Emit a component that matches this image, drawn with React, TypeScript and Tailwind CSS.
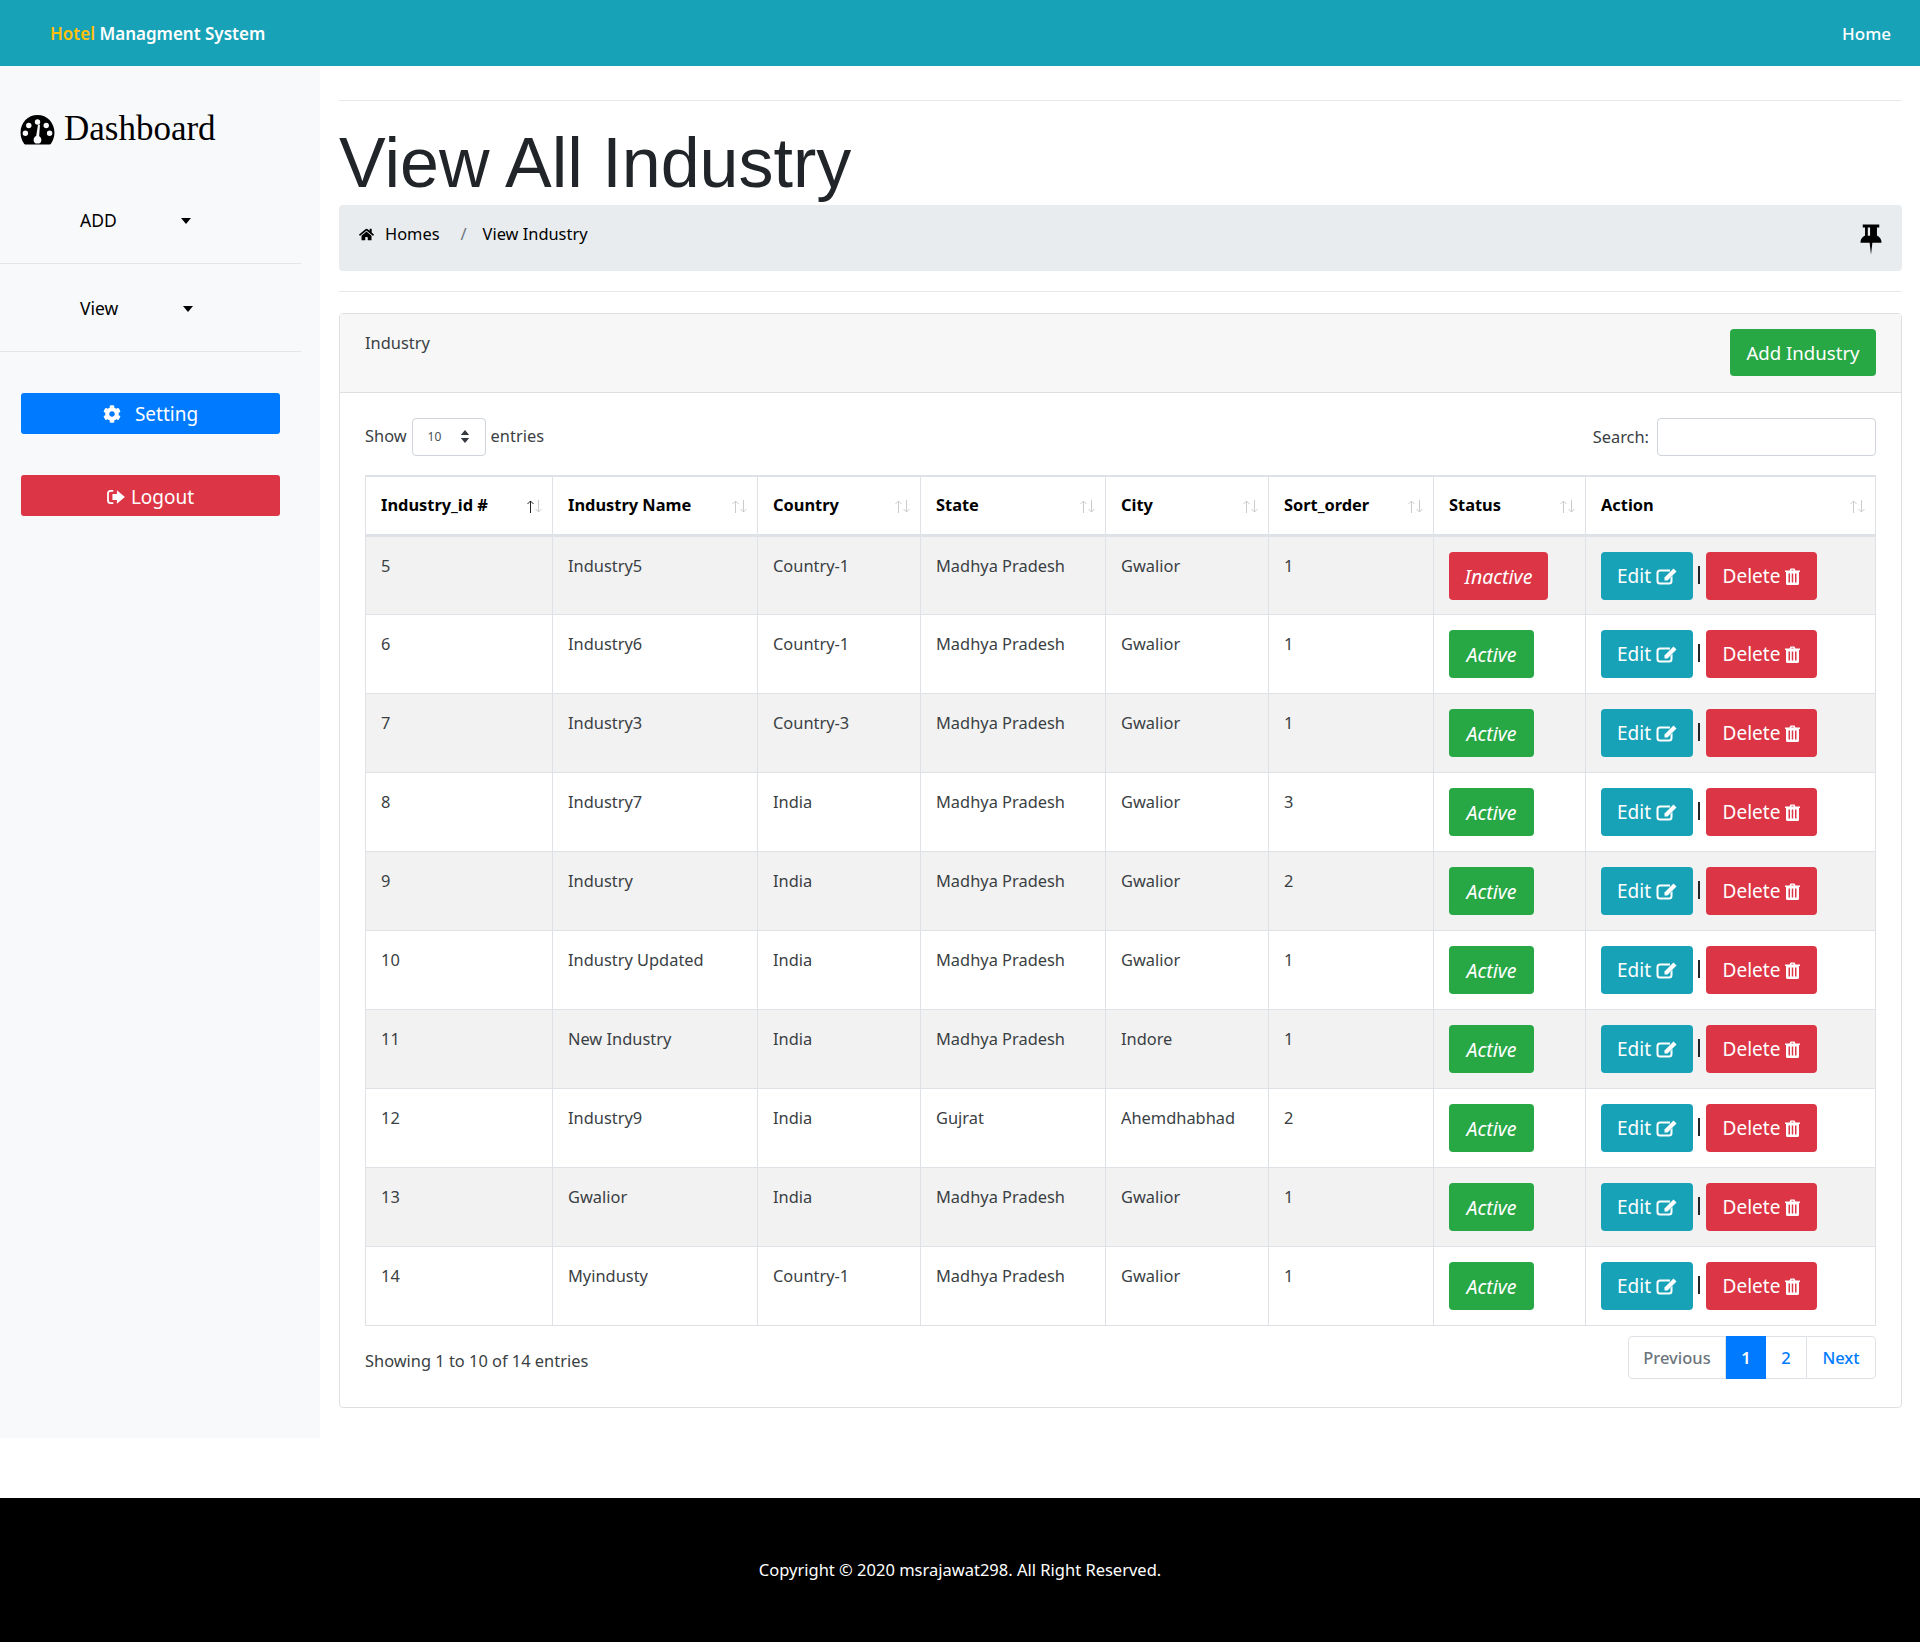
// App.tsx
import React from 'react';
import { FaHome, FaCog } from 'react-icons/fa';

const rows = [
  { id: '5', name: 'Industry5', country: 'Country-1', state: 'Madhya Pradesh', city: 'Gwalior', sort: '1', active: false },
  { id: '6', name: 'Industry6', country: 'Country-1', state: 'Madhya Pradesh', city: 'Gwalior', sort: '1', active: true },
  { id: '7', name: 'Industry3', country: 'Country-3', state: 'Madhya Pradesh', city: 'Gwalior', sort: '1', active: true },
  { id: '8', name: 'Industry7', country: 'India', state: 'Madhya Pradesh', city: 'Gwalior', sort: '3', active: true },
  { id: '9', name: 'Industry', country: 'India', state: 'Madhya Pradesh', city: 'Gwalior', sort: '2', active: true },
  { id: '10', name: 'Industry Updated', country: 'India', state: 'Madhya Pradesh', city: 'Gwalior', sort: '1', active: true },
  { id: '11', name: 'New Industry', country: 'India', state: 'Madhya Pradesh', city: 'Indore', sort: '1', active: true },
  { id: '12', name: 'Industry9', country: 'India', state: 'Gujrat', city: 'Ahemdhabhad', sort: '2', active: true },
  { id: '13', name: 'Gwalior', country: 'India', state: 'Madhya Pradesh', city: 'Gwalior', sort: '1', active: true },
  { id: '14', name: 'Myindusty', country: 'Country-1', state: 'Madhya Pradesh', city: 'Gwalior', sort: '1', active: true },
];

const headers = [
  { label: 'Industry_id #', w: 'w-[187px]', sorted: true },
  { label: 'Industry Name', w: 'w-[205px]' },
  { label: 'Country', w: 'w-[163px]' },
  { label: 'State', w: 'w-[185px]' },
  { label: 'City', w: 'w-[163px]' },
  { label: 'Sort_order', w: 'w-[165px]' },
  { label: 'Status', w: 'w-[152px]' },
  { label: 'Action', w: 'w-[290px]' },
];

const Caret = () => <span className="inline-block w-0 h-0 border-x-[5.5px] border-x-transparent border-t-[6px] border-t-black" />;

const DashboardIcon = () => (
  <svg viewBox="0 0 36 32" className="w-[35px] h-[31px]" fill="#000">
    <path fillRule="evenodd" d="M18 1C8 1 0.5 9 0.5 19c0 4 1.2 8 3.5 11.5 .5 .7 1 1 2 1h24c1 0 1.5-.3 2-1C34.3 27 35.5 23 35.5 19 35.5 9 28 1 18 1zM18 5.500a2.800 2.800 0 1 1 0 5.600 2.800 2.800 0 0 1 0-5.600zM9 9a2.800 2.800 0 1 1 0 5.600A2.800 2.800 0 0 1 9 9zm18 0a2.800 2.800 0 1 1 0 5.600A2.800 2.800 0 0 1 27 9zM5.500 17a2.800 2.800 0 1 1 0 5.600 2.800 2.800 0 0 1 0-5.600zm25 0a2.800 2.800 0 1 1 0 5.600 2.800 2.800 0 0 1 0-5.600zM20.500 11.500l-.8 11.400c1.300 .7 2.300 2 2.300 3.600a4 4 0 0 1-8 0c0-1.700 1.100-3.100 2.600-3.700l1.900-11.400c.2-.9 2.100-.9 2 .1z" />
  </svg>
);

const PinIcon = () => (
  <svg viewBox="0 0 24 33" className="w-[22px] h-[33px]" fill="#000">
    <path fillRule="evenodd" d="M3 0h18v3.500h-2.500V12c3 1.500 5 4 5 8H13.500L12 33 10.500 20H.5c0-4 2-6.500 5-8V3.500H3zM8.500 3.500V12.500H11V3.500z" />
  </svg>
);

const LogoutIcon = () => (
  <svg viewBox="0 0 20 18" className="w-[18px] h-[16px]" fill="white">
    <path d="M7 1H4a4 4 0 0 0-4 4v8a4 4 0 0 0 4 4h3v-2H4a2 2 0 0 1-2-2V5a2 2 0 0 1 2-2h3zM11 1.500v4H6v7h5v4L20 9z" />
  </svg>
);

const EditIcon = () => (
  <svg viewBox="0 0 21 17" className="w-[21px] h-[17px]" fill="white">
    <path d="M4 1.500h10v2H4A1.500 1.500 0 0 0 2.500 5v8A1.500 1.500 0 0 0 4 14.500h9A1.500 1.500 0 0 0 14.500 13v-3l2-2v5a3.500 3.500 0 0 1-3.500 3.500H4A3.500 3.500 0 0 1 .5 13V5A3.500 3.500 0 0 1 4 1.500z" />
    <path d="M17.500 .5l3 3L11.500 12.500H8.500V9.500z" />
  </svg>
);

const TrashIcon = () => (
  <svg viewBox="0 0 15 17" className="w-[15px] h-[17px]" fill="white">
    <path fillRule="evenodd" d="M4.500 2.500L5.500 .5h4l1 2H15V4H14V15.500A1.500 1.500 0 0 1 12.500 17h-10A1.500 1.500 0 0 1 1 15.500V4H0V2.500zM6.300 2.500h2.400l-.4-.8H6.700zM3.500 5.500v9h1.500v-9zM6.750 5.500v9h1.500v-9zM10 5.500v9h1.500v-9z" />
  </svg>
);

const SortIcon = ({ sorted }: { sorted?: boolean }) => (
  <svg viewBox="0 0 15 13" className="absolute right-[10px] top-[23px] w-[15px] h-[13px]" fill="none" strokeWidth="1">
    <path d="M3.500 13V1M.5 4l3-3 3 3" stroke={sorted ? '#212529' : '#c9cbcd'} />
    <path d="M11.500 0v12M8.500 9l3 3 3-3" stroke="#c9cbcd" />
  </svg>
);

const App = () => {
  return (
    <div className="bg-white text-[#212529] text-[16.4px] font-['Noto_Sans','Open_Sans',sans-serif]">
      <nav className="h-[66px] bg-[#17a2b8] flex items-center justify-between pl-[50px] pr-[29px] pt-[2px]">
        <div className="font-semibold text-[17px] text-white">
          <span className="text-[#ffc107]">Hotel</span> Managment System
        </div>
        <a className="text-white font-medium text-[17px]">Home</a>
      </nav>

      <div className="flex h-[1372px]">
        <aside className="w-[320px] shrink-0 bg-[#f8f9fa]">
          <div className="w-[301px]">
            <div className="flex items-center h-[126px] pl-[20px] gap-[9px]">
              <DashboardIcon />
              <h3 className="text-[35px] font-['Liberation_Serif',serif] text-black">Dashboard</h3>
            </div>
            <div className="h-[72px] border-b border-[#e3e5e7] flex items-center pl-[80px] pb-[14px] text-black text-[17.500px]">
              <span className="w-[101px]">ADD</span>
              <Caret />
            </div>
            <div className="h-[88px] border-b border-[#e3e5e7] flex items-center pl-[80px] pt-[2px] text-black text-[17.500px]">
              <span className="w-[103px]">View</span>
              <Caret />
            </div>
          </div>
          <div className="pl-[21px] w-[280px] box-content">
            <button className="mt-[41px] w-[259px] h-[41px] pt-[1px] bg-[#007bff] rounded-[3px] text-white text-[19px] flex items-center justify-center gap-[14px]">
              <FaCog className="text-[18px]" />
              Setting
            </button>
            <button className="mt-[41px] w-[259px] h-[41px] pt-[3px] bg-[#dc3545] rounded-[3px] text-white text-[19px] flex items-center justify-center gap-[6px]">
              <LogoutIcon />
              Logout
            </button>
          </div>
        </aside>

        <main className="flex-1 pl-[19px] pr-[19px]">
          <hr className="mt-[34px] border-[#e7e8e9]" />
          <h1 className="font-['Liberation_Sans',sans-serif] text-[70px] leading-[84px] mt-[20px] text-[#212529]">View All Industry</h1>
          <div className="h-[66px] bg-[#e9ecef] rounded-[4px] flex justify-between pl-[20px] pr-[20px]">
            <div className="flex items-center h-[59px] text-black">
              <FaHome className="text-[15px] mr-[11px]" />
              <span>Homes</span>
              <span className="ml-[21px] mr-[16px] text-[#6c757d]">/</span>
              <span>View Industry</span>
            </div>
            <div className="pt-[18px]">
              <PinIcon />
            </div>
          </div>
          <hr className="mt-[20px] border-[#e7e8e9]" />

          <section className="mt-[21px] h-[1095px] border border-[#dfdfdf] rounded-[4px]">
            <div className="h-[79px] bg-[#f7f7f7] border-b border-[#dfdfdf] flex justify-between pl-[25px] pr-[25px] pt-[15px]">
              <span className="text-[#3a3f44] mt-[2px]">Industry</span>
              <button className="w-[146px] h-[47px] bg-[#28a745] rounded-[4px] text-white text-[18.600px]">Add Industry</button>
            </div>

            <div className="px-[25px]">
              <div className="h-[82px] pt-[4px] flex items-center justify-between">
                <div className="flex items-center text-[#3a3f44]">
                  Show
                  <div className="mx-[5px] mt-[1px] w-[74px] h-[38px] border border-[#ced4da] rounded-[4px] flex items-center justify-between pl-[15px] pr-[15px] text-[12px] text-[#495057]">
                    10
                    <svg viewBox="0 0 10 14" className="w-[10px] h-[13px]" fill="#343a40">
                      <path d="M5 0l4.500 5.500H.5zM5 14L.5 8.500h9z" />
                    </svg>
                  </div>
                  entries
                </div>
                <div className="flex items-center gap-[8px] text-[#3a3f44]">
                  <span className="mt-[3px]">Search:</span>
                  <input className="mt-[1px] w-[219px] h-[38px] border border-[#ced4da] rounded-[4px] bg-white" />
                </div>
              </div>

              <table className="w-full table-fixed border-collapse border border-[#dee2e6]">
                <thead>
                  <tr className="h-[59px] border-t-[2px] border-b-[3px] border-[#dee2e6]">
                    {headers.map(h => (
                      <th key={h.label} className={`${h.w} relative text-left font-bold text-black border-x border-[#dee2e6] pl-[15px]`}>
                        {h.label}
                        <SortIcon sorted={h.sorted} />
                      </th>
                    ))}
                  </tr>
                </thead>
                <tbody>
                  {rows.map((r, i) => (
                    <tr key={r.id} className={`h-[79px] border-t border-[#dee2e6] ${i % 2 === 0 ? 'bg-[#f2f2f2]' : 'bg-white'}`}>
                      {[r.id, r.name, r.country, r.state, r.city, r.sort].map((v, j) => (
                        <td key={j} className="align-top border-x border-[#dee2e6] pl-[15px] pt-[17px] text-[#3a3f44]">{v}</td>
                      ))}
                      <td className="align-top border-x border-[#dee2e6] pl-[15px] pt-[15px]">
                        {r.active ? (
                          <button className="w-[85px] h-[48px] pt-[2px] bg-[#28a745] rounded-[4px] text-white text-[19.500px] italic">Active</button>
                        ) : (
                          <button className="w-[99px] h-[48px] pt-[2px] bg-[#dc3545] rounded-[4px] text-white text-[19.500px] italic">Inactive</button>
                        )}
                      </td>
                      <td className="align-top border-x border-[#dee2e6] pl-[15px] pt-[15px]">
                        <div className="flex items-center">
                          <button className="w-[92px] h-[48px] pt-[2px] bg-[#17a2b8] rounded-[4px] text-white text-[19px] flex items-center justify-center gap-[5px]">
                            Edit <EditIcon />
                          </button>
                          <span className="w-[2px] h-[18px] bg-[#212529] ml-[5px] mr-[5px] -mt-[2px]" />
                          <button className="ml-[1px] w-[111px] h-[48px] pt-[2px] bg-[#dc3545] rounded-[4px] text-white text-[19px] flex items-center justify-center gap-[5px]">
                            Delete <TrashIcon />
                          </button>
                        </div>
                      </td>
                    </tr>
                  ))}
                </tbody>
              </table>

              <div className="flex justify-between mt-[10px]">
                <span className="text-[#3a3f44] mt-[13px]">Showing 1 to 10 of 14 entries</span>
                <div className="flex h-[43px] text-[#007bff] text-[16.500px] font-medium">
                  <span className="w-[98px] pt-[2px] border border-[#dee2e6] rounded-l-[4px] flex items-center justify-center text-[#6c757d]">Previous</span>
                  <span className="w-[40px] pt-[2px] bg-[#007bff] text-white flex items-center justify-center font-semibold">1</span>
                  <span className="w-[40px] pt-[2px] border-y border-[#dee2e6] flex items-center justify-center">2</span>
                  <span className="w-[70px] pt-[2px] border border-[#dee2e6] rounded-r-[4px] flex items-center justify-center">Next</span>
                </div>
              </div>
            </div>
          </section>
        </main>
      </div>

      <footer className="mt-[60px] h-[144px] bg-black text-white text-[16.500px] flex items-center justify-center">
        Copyright © 2020 msrajawat298. All Right Reserved.
      </footer>
    </div>
  );
};

export default App;
